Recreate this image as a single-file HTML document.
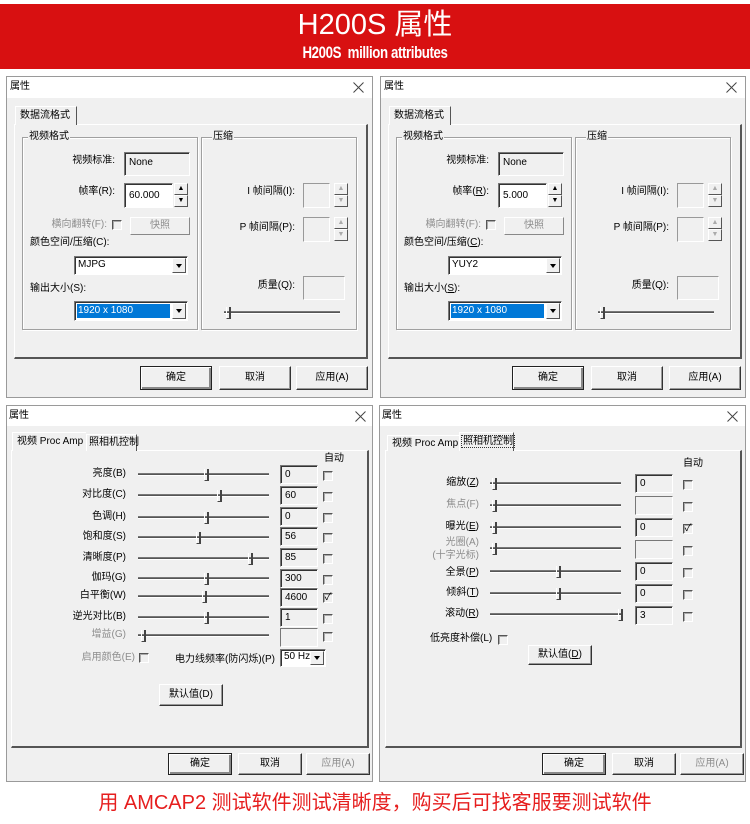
<!DOCTYPE html>
<html><head><meta charset="utf-8">
<style>
*{margin:0;padding:0;box-sizing:border-box}
body{width:750px;height:824px;background:#fff;position:relative;overflow:hidden;font-family:"Liberation Sans","Noto Sans CJK SC",sans-serif}
.a{position:absolute}
.t{position:absolute;font-size:10px;line-height:12px;color:#000;white-space:nowrap}
.g{color:#8d8d8d}
.rt{text-align:right}
.dlg{position:absolute;background:#f0f0f0;border:1px solid #9a9a9a}
.tb{position:absolute;left:0;top:0;right:0;background:#fff}
.x{position:absolute;width:11px;height:11px}
.tab{position:absolute;background:#f0f0f0;border:1px solid #fff;border-right-color:#555;border-bottom:none;font-size:10px;line-height:15px;padding-left:4px;white-space:nowrap}
.pan{position:absolute;border:1px solid #fff;border-right:2px solid #555;border-bottom:2px solid #555}
.grp{position:absolute;border:1px solid #a0a0a0;box-shadow:1px 1px 0 #fff inset,1px 1px 0 #fff}
.lg{position:absolute;background:#f0f0f0;font-size:10px;line-height:12px;padding:0 1px}
.sb{position:absolute;background:#f0f0f0;border:1px solid;border-color:#777 #fff #fff #777;box-shadow:inset 1px 1px 0 #333;font-size:10px;line-height:14px;padding:3px 0 0 4px;white-space:nowrap}
.wb{background:#fff}
.btn{position:absolute;background:#f0f0f0;border:1px solid;border-color:#fff #333 #333 #fff;box-shadow:inset -1px -1px 0 #999;font-size:10px;text-align:center;white-space:nowrap}
.df{border:1px solid #222;box-shadow:inset 1px 1px 0 #fff,inset -2px -2px 0 #888}
.cb{position:absolute;width:10px;height:10px;border:1px solid;border-color:#555 #fff #fff #555;box-shadow:inset 1px 1px 0 #aaa;font-size:10px;line-height:8px;text-align:center}
.trk{position:absolute;height:3px;border-top:1px solid #777;border-bottom:1px solid #fff;background:#555;background-clip:padding-box}
.th{position:absolute;width:5px;height:12px;border-right:2px solid #444;border-bottom:1px solid #444;border-left:1px solid #fff}
.sp{position:absolute;width:14px;height:12px;background:#f0f0f0;border:1px solid;border-color:#fff #555 #555 #fff;font-size:7px;line-height:10px;text-align:center;color:#000}
.cmb{position:absolute;background:#fff;border:1px solid;border-color:#777 #fff #fff #777;box-shadow:inset 1px 1px 0 #333;font-size:10px;line-height:15px;padding-left:3px;white-space:nowrap}
.dd{position:absolute;top:1px;right:1px;width:14px;bottom:1px;background:#f0f0f0;border:1px solid;border-color:#fff #555 #555 #fff}
.dd:after{content:"";position:absolute;left:3px;top:50%;margin-top:-2px;border-left:3px solid transparent;border-right:3px solid transparent;border-top:4px solid #000}
</style></head><body>

<div class="a" style="left:0;top:4px;width:750px;height:65px;background:#d81011"></div>
<div class="a" style="left:0;top:8px;width:750px;text-align:center;color:#fff;font-size:29px;line-height:34px;font-family:'Liberation Sans','Noto Sans CJK SC',sans-serif">H200S 属性</div>
<div class="a" style="left:0;top:44px;width:750px;text-align:center;color:#fff;font-size:17px;line-height:18px;font-weight:bold;transform:scaleX(0.78);letter-spacing:-0.5px">H200S&nbsp; million attributes</div>

<!-- Dialog 1 -->
<div class="dlg" style="left:6px;top:76px;width:367px;height:322px">
 <div class="tb" style="height:21px"></div>
 <div class="t" style="left:3px;top:4px">属性</div>
 <svg class="x" style="left:346px;top:5px" viewBox="0 0 11 11"><path d="M0.5 0.5L10.5 10.5M10.5 0.5L0.5 10.5" stroke="#444" stroke-width="1"/></svg>
 <div class="pan" style="left:7px;top:47px;width:354px;height:235px"></div>
 <div class="tab" style="left:8px;top:29px;width:62px;height:19px;line-height:17px">数据流格式</div>
 <div class="grp" style="left:15px;top:60px;width:176px;height:193px"></div><div class="lg" style="left:21px;top:54px">视频格式</div>
 <div class="grp" style="left:194px;top:60px;width:156px;height:193px"></div><div class="lg" style="left:205px;top:54px">压缩</div>
 <div class="t rt" style="left:40px;width:68px;top:78px">视频标准:</div>
 <div class="sb" style="left:117px;top:75px;width:66px;height:24px">None</div>
 <div class="t rt" style="left:40px;width:68px;top:109px">帧率(R):</div>
 <div class="sb wb" style="left:117px;top:106px;width:49px;height:25px;padding-top:5px">60.000</div>
 <div class="sp" style="left:167px;top:106px">▲</div><div class="sp" style="left:167px;top:118px">▼</div>
 <div class="t rt g" style="left:20px;width:80px;top:142px">横向翻转(F):</div>
 <div class="cb" style="left:105px;top:143px"></div>
 <div class="btn g" style="left:123px;top:140px;width:60px;height:18px;line-height:15px;box-shadow:none;border-color:#fff #888 #888 #fff">快照</div>
 <div class="t" style="left:23px;top:160px">颜色空间/压缩(C):</div>
 <div class="cmb" style="left:67px;top:179px;width:114px;height:19px">MJPG<div class="dd"></div></div>
 <div class="t" style="left:23px;top:206px">输出大小(S):</div>
 <div class="cmb" style="left:67px;top:224px;width:114px;height:20px"><span style="position:absolute;left:2px;top:2px;width:93px;height:14px;background:#0078d7;color:#fff;padding-left:1px;line-height:14px">1920 x 1080</span><div class="dd"></div></div>
 <div class="t rt" style="left:200px;width:88px;top:109px">I 帧间隔(I):</div>
 <div class="sb" style="left:296px;top:106px;width:27px;height:25px;box-shadow:none;border-color:#999 #fff #fff #999"></div>
 <div class="sp" style="left:327px;top:106px;color:#aaa">▲</div><div class="sp" style="left:327px;top:118px;color:#aaa">▼</div>
 <div class="t rt" style="left:200px;width:88px;top:145px">P 帧间隔(P):</div>
 <div class="sb" style="left:296px;top:140px;width:27px;height:25px;box-shadow:none;border-color:#999 #fff #fff #999"></div>
 <div class="sp" style="left:327px;top:140px;color:#aaa">▲</div><div class="sp" style="left:327px;top:152px;color:#aaa">▼</div>
 <div class="t rt" style="left:200px;width:88px;top:203px">质量(Q):</div>
 <div class="sb" style="left:296px;top:199px;width:42px;height:24px;box-shadow:none;border-color:#999 #fff #fff #999"></div>
 <div class="trk" style="left:217px;top:234px;width:116px"></div><div class="th" style="left:219px;top:230px"></div>
 <div class="btn df" style="left:133px;top:289px;width:72px;height:24px;line-height:21px">确定</div>
 <div class="btn" style="left:212px;top:289px;width:72px;height:24px;line-height:21px">取消</div>
 <div class="btn" style="left:289px;top:289px;width:72px;height:24px;line-height:21px">应用(A)</div>
</div>

<!-- Dialog 2 -->
<div class="dlg" style="left:380px;top:76px;width:366px;height:322px">
 <div class="tb" style="height:21px"></div>
 <div class="t" style="left:3px;top:4px">属性</div>
 <svg class="x" style="left:345px;top:5px" viewBox="0 0 11 11"><path d="M0.5 0.5L10.5 10.5M10.5 0.5L0.5 10.5" stroke="#444" stroke-width="1"/></svg>
 <div class="pan" style="left:7px;top:47px;width:354px;height:235px"></div>
 <div class="tab" style="left:8px;top:29px;width:62px;height:19px;line-height:17px">数据流格式</div>
 <div class="grp" style="left:15px;top:60px;width:176px;height:193px"></div><div class="lg" style="left:21px;top:54px">视频格式</div>
 <div class="grp" style="left:194px;top:60px;width:156px;height:193px"></div><div class="lg" style="left:205px;top:54px">压缩</div>
 <div class="t rt" style="left:40px;width:68px;top:78px">视频标准:</div>
 <div class="sb" style="left:117px;top:75px;width:66px;height:24px">None</div>
 <div class="t rt" style="left:40px;width:68px;top:109px">帧率(<u>R</u>):</div>
 <div class="sb wb" style="left:117px;top:106px;width:49px;height:25px;padding-top:5px">5.000</div>
 <div class="sp" style="left:167px;top:106px">▲</div><div class="sp" style="left:167px;top:118px">▼</div>
 <div class="t rt g" style="left:20px;width:80px;top:142px">横向翻转(F):</div>
 <div class="cb" style="left:105px;top:143px"></div>
 <div class="btn g" style="left:123px;top:140px;width:60px;height:18px;line-height:15px;box-shadow:none;border-color:#fff #888 #888 #fff">快照</div>
 <div class="t" style="left:23px;top:160px">颜色空间/压缩(<u>C</u>):</div>
 <div class="cmb" style="left:67px;top:179px;width:114px;height:19px">YUY2<div class="dd"></div></div>
 <div class="t" style="left:23px;top:206px">输出大小(<u>S</u>):</div>
 <div class="cmb" style="left:67px;top:224px;width:114px;height:20px"><span style="position:absolute;left:2px;top:2px;width:93px;height:14px;background:#0078d7;color:#fff;padding-left:1px;line-height:14px">1920 x 1080</span><div class="dd"></div></div>
 <div class="t rt" style="left:200px;width:88px;top:109px">I 帧间隔(I):</div>
 <div class="sb" style="left:296px;top:106px;width:27px;height:25px;box-shadow:none;border-color:#999 #fff #fff #999"></div>
 <div class="sp" style="left:327px;top:106px;color:#aaa">▲</div><div class="sp" style="left:327px;top:118px;color:#aaa">▼</div>
 <div class="t rt" style="left:200px;width:88px;top:145px">P 帧间隔(P):</div>
 <div class="sb" style="left:296px;top:140px;width:27px;height:25px;box-shadow:none;border-color:#999 #fff #fff #999"></div>
 <div class="sp" style="left:327px;top:140px;color:#aaa">▲</div><div class="sp" style="left:327px;top:152px;color:#aaa">▼</div>
 <div class="t rt" style="left:200px;width:88px;top:203px">质量(Q):</div>
 <div class="sb" style="left:296px;top:199px;width:42px;height:24px;box-shadow:none;border-color:#999 #fff #fff #999"></div>
 <div class="trk" style="left:217px;top:234px;width:116px"></div><div class="th" style="left:219px;top:230px"></div>
 <div class="btn df" style="left:131px;top:289px;width:72px;height:24px;line-height:21px">确定</div>
 <div class="btn" style="left:210px;top:289px;width:72px;height:24px;line-height:21px">取消</div>
 <div class="btn" style="left:288px;top:289px;width:72px;height:24px;line-height:21px">应用(A)</div>
</div>

<!-- Dialog 3 -->
<div class="dlg" style="left:6px;top:405px;width:367px;height:377px">
 <div class="tb" style="height:20px"></div>
 <div class="t" style="left:2px;top:4px">属性</div>
 <svg class="x" style="left:348px;top:5px" viewBox="0 0 11 11"><path d="M0.5 0.5L10.5 10.5M10.5 0.5L0.5 10.5" stroke="#444" stroke-width="1"/></svg>
 <div class="pan" style="left:4px;top:44px;width:358px;height:298px"></div>
 <div class="tab" style="left:5px;top:26px;width:74px;height:19px;line-height:17px;border-right:none">视频 Proc Amp</div>
 <div class="tab" style="left:79px;top:28px;width:51px;height:17px;line-height:15px;padding-left:2px">照相机控制</div>
 <div class="t" style="left:317px;top:47px">自动</div>

 <div class="t rt" style="left:40px;width:79px;top:62px">亮度(B)</div><div class="trk" style="left:131px;top:67px;width:131px"></div><div class="th" style="left:197px;top:63px"></div><div class="sb" style="left:273px;top:59px;width:38px;height:19px;padding-top:2px">0</div><div class="cb" style="left:316px;top:65px"></div>
 <div class="t rt" style="left:40px;width:79px;top:83px">对比度(C)</div><div class="trk" style="left:131px;top:88px;width:131px"></div><div class="th" style="left:210px;top:84px"></div><div class="sb" style="left:273px;top:80px;width:38px;height:19px;padding-top:2px">60</div><div class="cb" style="left:316px;top:86px"></div>
 <div class="t rt" style="left:40px;width:79px;top:105px">色调(H)</div><div class="trk" style="left:131px;top:110px;width:131px"></div><div class="th" style="left:197px;top:106px"></div><div class="sb" style="left:273px;top:101px;width:38px;height:19px;padding-top:2px">0</div><div class="cb" style="left:316px;top:107px"></div>
 <div class="t rt" style="left:40px;width:79px;top:125px">饱和度(S)</div><div class="trk" style="left:131px;top:130px;width:131px"></div><div class="th" style="left:189px;top:126px"></div><div class="sb" style="left:273px;top:121px;width:38px;height:19px;padding-top:2px">56</div><div class="cb" style="left:316px;top:127px"></div>
 <div class="t rt" style="left:40px;width:79px;top:146px">清晰度(P)</div><div class="trk" style="left:131px;top:151px;width:131px"></div><div class="th" style="left:241px;top:147px"></div><div class="sb" style="left:273px;top:142px;width:38px;height:19px;padding-top:2px">85</div><div class="cb" style="left:316px;top:148px"></div>
 <div class="t rt" style="left:40px;width:79px;top:166px">伽玛(G)</div><div class="trk" style="left:131px;top:171px;width:131px"></div><div class="th" style="left:197px;top:167px"></div><div class="sb" style="left:273px;top:163px;width:38px;height:19px;padding-top:2px">300</div><div class="cb" style="left:316px;top:169px"></div>
 <div class="t rt" style="left:40px;width:79px;top:184px">白平衡(W)</div><div class="trk" style="left:131px;top:189px;width:131px"></div><div class="th" style="left:195px;top:185px"></div><div class="sb" style="left:273px;top:182px;width:38px;height:19px;padding-top:2px">4600</div><div class="cb" style="left:316px;top:187px">✓</div>
 <div class="t rt" style="left:40px;width:79px;top:205px">逆光对比(B)</div><div class="trk" style="left:131px;top:210px;width:131px"></div><div class="th" style="left:197px;top:206px"></div><div class="sb" style="left:273px;top:202px;width:38px;height:19px;padding-top:2px">1</div><div class="cb" style="left:316px;top:208px"></div>
 <div class="t rt g" style="left:40px;width:79px;top:223px">增益(G)</div><div class="trk" style="left:131px;top:228px;width:131px"></div><div class="th" style="left:134px;top:224px"></div><div class="sb" style="left:273px;top:222px;width:38px;height:19px;box-shadow:none"></div><div class="cb" style="left:316px;top:226px"></div>
 <div class="t rt g" style="left:60px;width:68px;top:246px">启用颜色(E)</div><div class="cb" style="left:132px;top:247px"></div>
 <div class="t" style="left:168px;top:248px">电力线频率(防闪烁)(P)</div>
 <div class="cmb" style="left:273px;top:243px;width:46px;height:18px;line-height:14px">50 Hz<div class="dd"></div></div>
 <div class="btn" style="left:152px;top:278px;width:64px;height:22px;line-height:19px">默认值(D)</div>
 <div class="btn df" style="left:161px;top:347px;width:64px;height:22px;line-height:19px">确定</div>
 <div class="btn" style="left:231px;top:347px;width:64px;height:22px;line-height:19px">取消</div>
 <div class="btn g" style="left:299px;top:347px;width:64px;height:22px;line-height:19px">应用(A)</div>
</div>

<!-- Dialog 4 -->
<div class="dlg" style="left:379px;top:405px;width:367px;height:377px">
 <div class="tb" style="height:20px"></div>
 <div class="t" style="left:2px;top:4px">属性</div>
 <svg class="x" style="left:347px;top:5px" viewBox="0 0 11 11"><path d="M0.5 0.5L10.5 10.5M10.5 0.5L0.5 10.5" stroke="#444" stroke-width="1"/></svg>
 <div class="pan" style="left:5px;top:44px;width:357px;height:298px"></div>
 <div class="tab" style="left:7px;top:29px;width:72px;height:16px;line-height:15px;border-right:none">视频 Proc Amp</div>
 <div class="tab" style="left:79px;top:26px;width:55px;height:19px;line-height:17px;padding-left:2px"><span style="outline:1px dotted #333;padding:0 1px">照相机控制</span></div>
 <div class="t" style="left:303px;top:52px">自动</div>

 <div class="t rt" style="left:20px;width:79px;top:71px">缩放(<u>Z</u>)</div><div class="trk" style="left:110px;top:76px;width:131px"></div><div class="th" style="left:112px;top:72px"></div><div class="sb" style="left:255px;top:68px;width:38px;height:19px;padding-top:2px">0</div><div class="cb" style="left:303px;top:74px"></div>
 <div class="t rt g" style="left:20px;width:79px;top:93px">焦点(F)</div><div class="trk" style="left:110px;top:98px;width:131px"></div><div class="th" style="left:112px;top:94px"></div><div class="sb" style="left:255px;top:90px;width:38px;height:19px;box-shadow:none"></div><div class="cb" style="left:303px;top:96px"></div>
 <div class="t rt" style="left:20px;width:79px;top:115px">曝光(<u>E</u>)</div><div class="trk" style="left:110px;top:120px;width:131px"></div><div class="th" style="left:112px;top:116px"></div><div class="sb" style="left:255px;top:112px;width:38px;height:19px;padding-top:2px">0</div><div class="cb" style="left:303px;top:118px">✓</div>
 <div class="t rt g" style="left:20px;width:79px;top:131px">光圈(A)</div><div class="t rt g" style="left:20px;width:79px;top:144px">(十字光标)</div><div class="trk" style="left:110px;top:141px;width:131px"></div><div class="th" style="left:112px;top:137px"></div><div class="sb" style="left:255px;top:134px;width:38px;height:19px;box-shadow:none"></div><div class="cb" style="left:303px;top:140px"></div>
 <div class="t rt" style="left:20px;width:79px;top:161px">全景(<u>P</u>)</div><div class="trk" style="left:110px;top:164px;width:131px"></div><div class="th" style="left:176px;top:160px"></div><div class="sb" style="left:255px;top:156px;width:38px;height:19px;padding-top:2px">0</div><div class="cb" style="left:303px;top:162px"></div>
 <div class="t rt" style="left:20px;width:79px;top:181px">倾斜(<u>T</u>)</div><div class="trk" style="left:110px;top:186px;width:131px"></div><div class="th" style="left:176px;top:182px"></div><div class="sb" style="left:255px;top:178px;width:38px;height:19px;padding-top:2px">0</div><div class="cb" style="left:303px;top:184px"></div>
 <div class="t rt" style="left:20px;width:79px;top:202px">滚动(<u>R</u>)</div><div class="trk" style="left:110px;top:207px;width:131px"></div><div class="th" style="left:238px;top:203px"></div><div class="sb" style="left:255px;top:200px;width:38px;height:19px;padding-top:2px">3</div><div class="cb" style="left:303px;top:206px"></div>
 <div class="t" style="left:50px;top:227px">低亮度补偿(L)</div><div class="cb" style="left:118px;top:229px"></div>
 <div class="btn" style="left:148px;top:239px;width:64px;height:20px;line-height:17px">默认值(<u>D</u>)</div>
 <div class="btn df" style="left:162px;top:347px;width:64px;height:22px;line-height:19px">确定</div>
 <div class="btn" style="left:232px;top:347px;width:64px;height:22px;line-height:19px">取消</div>
 <div class="btn g" style="left:300px;top:347px;width:64px;height:22px;line-height:19px">应用(A)</div>
</div>

<div class="a" style="left:0;top:790px;width:750px;text-align:center;color:#e61e1e;font-size:20px;line-height:26px;font-family:'Liberation Sans','Noto Sans CJK SC',sans-serif">用 AMCAP2 测试软件测试清晰度，购买后可找客服要测试软件</div>
</body></html>
